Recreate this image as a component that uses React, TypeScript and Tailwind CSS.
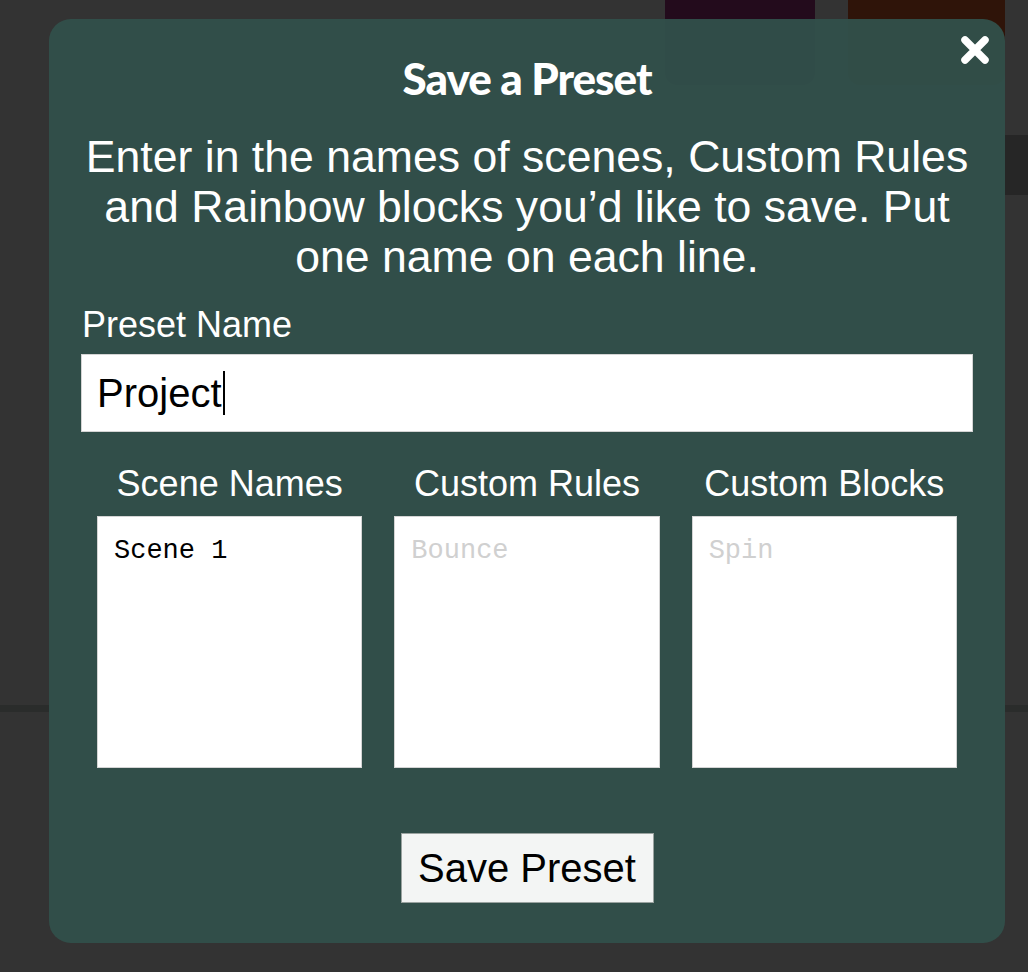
const CloseIcon = () => (
    <svg className="h-[34px] w-[34px]" viewBox="0 0 34 34" fill="none" stroke="white" strokeWidth={7.5} strokeLinecap="round">
        <path d="M7 7L27 27M27 7L7 27" />
    </svg>
)

const columns = [
    { label: 'Scene Names', value: 'Scene 1', placeholder: '' },
    { label: 'Custom Rules', value: '', placeholder: 'Bounce' },
    { label: 'Custom Blocks', value: '', placeholder: 'Spin' },
]

export default function App() {
    return (
        <div className="relative h-[972px] w-full overflow-hidden bg-[#333333] font-['Liberation_Sans',Arial,sans-serif]">
            {/* Page behind the modal */}
            <div className="flex justify-end gap-[33px] pr-[23px]">
                <div className="h-[85px] w-[150px] rounded-b-xl bg-[#230b1c]" />
                <div className="h-[85px] w-[157px] rounded-b-xl bg-[#2f1409]" />
            </div>
            <div className="mt-[50px] ml-auto h-[60px] w-[420px] bg-[#262626]" />
            <div className="mt-[510px] h-[7px] w-full bg-[#2a2c2b]" />

            {/* Modal */}
            <div className="absolute left-[49px] top-[19px] h-[924px] w-[956px] rounded-[22px] bg-[#32504b]/95 px-8 text-white">
                <button className="absolute right-[13px] top-[14px]">
                    <CloseIcon />
                </button>

                <h2 className="mt-[34px] text-center font-['Lato',sans-serif] text-[44px] font-black leading-[50px] tracking-[-1px]">
                    Save a Preset
                </h2>

                <p className="mt-[29px] text-center text-[44.6px] leading-[50px]">
                    Enter in the names of scenes, Custom Rules and Rainbow blocks you’d like to save. Put one name on each line.
                </p>

                <label className="mt-[22px] block pl-px text-[36px] leading-[41px]">Preset Name</label>
                <div className="mt-[9px] flex h-[78px] items-center border border-[#d4d4d4] bg-white pl-[15px] text-[40px] text-black">
                    <span>Project</span>
                    <span className="ml-px h-[44px] w-[2px] bg-black" />
                </div>

                <div className="mt-[31px] grid grid-cols-3 gap-8 px-4">
                    {columns.map((col) => (
                        <div key={col.label} className="flex flex-col">
                            <span className="text-center text-[36px] leading-[41px]">{col.label}</span>
                            <textarea
                                className="mt-[12px] h-[252px] resize-none border border-[#d4d4d4] bg-white px-4 pt-[19px] pb-4 font-['Liberation_Mono','Courier_New',monospace] text-[27px] leading-[30px] text-black outline-none placeholder:text-[#d0d0d0]"
                                defaultValue={col.value}
                                placeholder={col.placeholder}
                            />
                        </div>
                    ))}
                </div>

                <div className="mt-[65px] flex justify-center">
                    <button className="h-[70px] w-[253px] border border-[#9aa3a0] bg-[#f3f5f4] text-[40px] text-black">
                        Save Preset
                    </button>
                </div>
            </div>
        </div>
    )
}
